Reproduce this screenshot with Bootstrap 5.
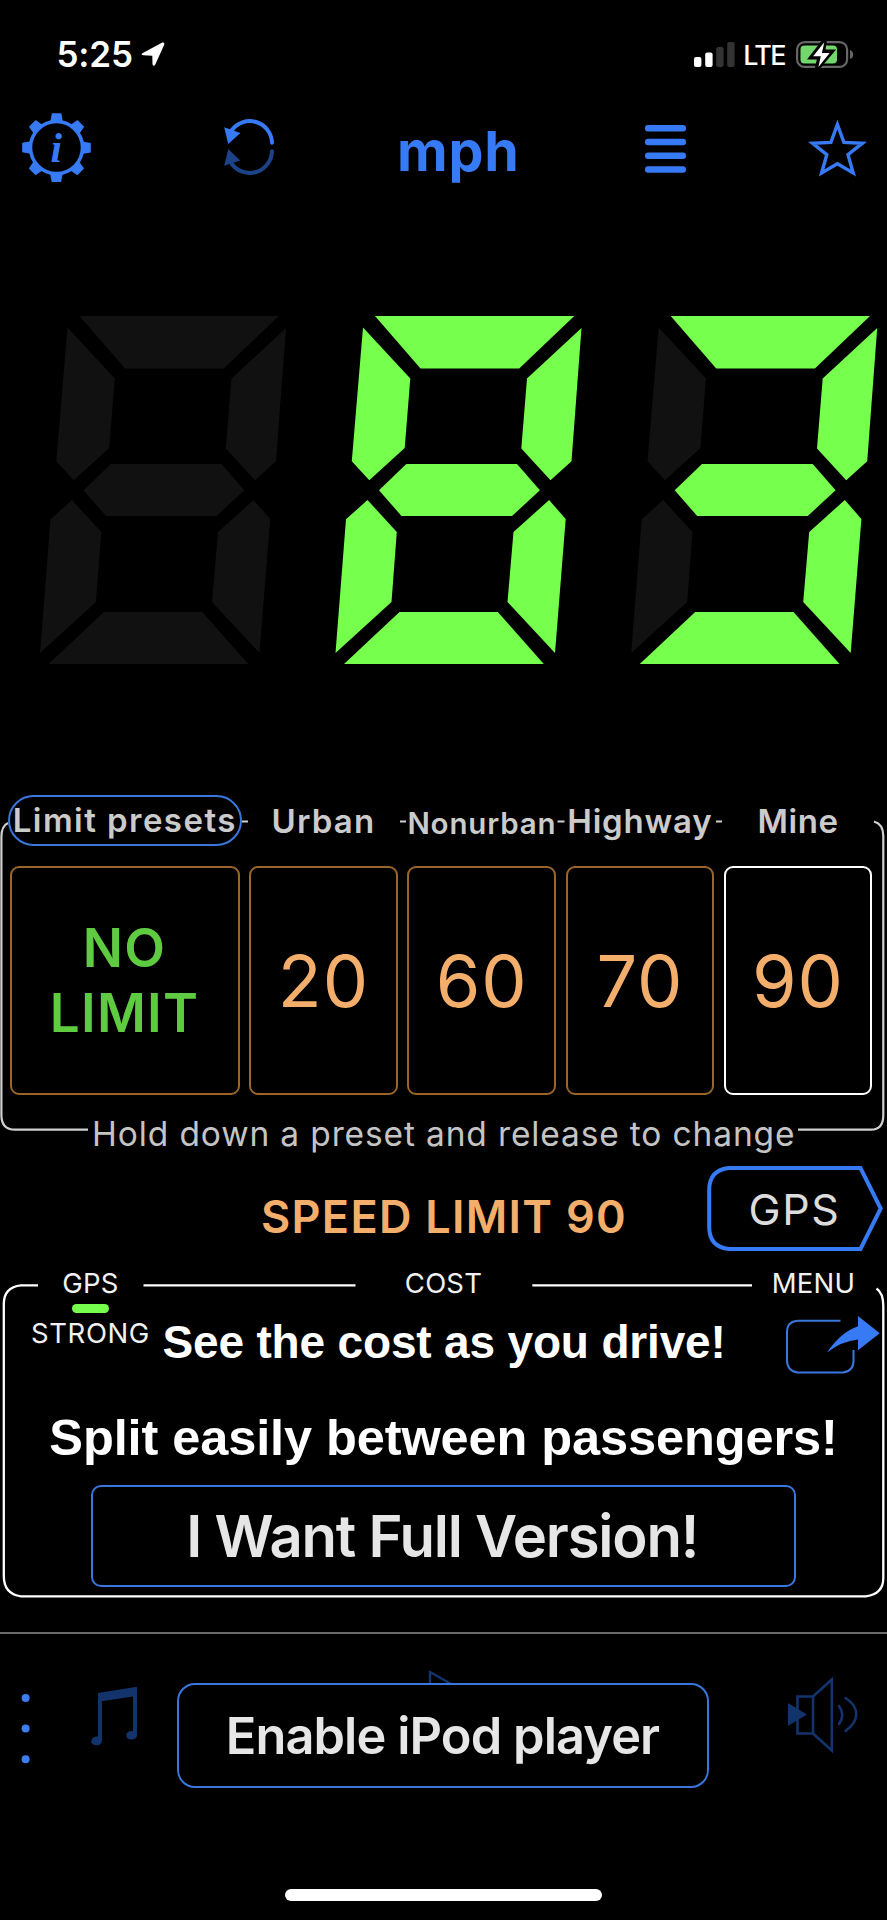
<!DOCTYPE html>
<html lang="en" data-bs-theme="dark">
<head>
<meta charset="utf-8">
<meta name="viewport" content="width=device-width, initial-scale=1">
<title>Speedometer</title>
<link href="https://cdn.jsdelivr.net/npm/bootstrap@5.3.0/dist/css/bootstrap.min.css" rel="stylesheet">
<style>
  :root { --blue:#377af5; --line-blue:#3a77dd; --dim-blue:#13336b; --lime:#77ff4e; --amber:#f3ae6b; --off:#111; }
  body { background:#000; color:#fff; font-family:Inter,"Liberation Sans",sans-serif; }
  .screen { width:887px; height:1920px; overflow:hidden; }
  .screen svg { display:block; flex:none; }
  .frame-lines { inset:0; pointer-events:none; }
  .clock { font-size:35px; font-weight:600; line-height:1; letter-spacing:-.16px; }
  .network { font-size:27px; font-weight:500; line-height:1; letter-spacing:-1.6px; }
  .status-bar { height:110px; padding-left:56.5px; padding-right:33px; }
  .toolbar { height:90px; }
  .unit { width:126px; font-size:55.5px; font-weight:700; line-height:1; letter-spacing:.8px; color:var(--blue); }
  .readout { height:590px; padding-top:90px; }
  .presets { height:370px; padding-left:9.5px; padding-top:5px; }
  .preset-grid { display:grid; grid-template-columns:230px repeat(4,148.5px); column-gap:9.7px; }
  .preset-label { font-size:33px; font-weight:600; line-height:50px; letter-spacing:1.2px; color:#cbcbcb; text-align:center; white-space:nowrap; padding-top:1px; }
  .label-pill { width:234.5px; height:51px; margin-left:-2px; border:2.4px solid var(--line-blue); border-radius:26px; line-height:47px; padding:0; display:flex; justify-content:center; letter-spacing:1.45px; }
  .preset { height:229px; border:2.3px solid #9a6529; border-radius:9px; color:var(--amber); font-size:72px; line-height:1; letter-spacing:.9px; background:none; padding:0; display:flex; align-items:center; justify-content:center; }
  .preset.no-limit { color:#5fcb40; font-size:53px; font-weight:600; line-height:65.5px; letter-spacing:1.3px; padding-top:1px; }
  .preset.chosen { border-color:#fff; }
  .hint { font-size:33.5px; line-height:40px; letter-spacing:.86px; color:#c4c4c4; margin-top:19px; margin-right:9px; text-align:center; white-space:nowrap; }
  .limit-row { height:100px; padding-left:261px; }
  .limit-text { font-size:45px; font-weight:600; line-height:60px; letter-spacing:1.28px; color:var(--amber); margin-top:27px; white-space:nowrap; }
  .gps-tag { width:176px; height:87px; margin-left:80px; margin-top:5px; font-size:43px; letter-spacing:1.5px; line-height:88px; padding-right:1px; color:#dcdcdc; }
  .cost-panel { height:340px; }
  .caption-text { font-size:27.5px; line-height:30px; letter-spacing:.2px; color:#f1f1f1; }
  .signal { width:36.5px; height:9.7px; border-radius:5px; background:var(--lime); }
  .promo { font-family:"Liberation Sans",sans-serif; font-weight:700; white-space:nowrap; }
  .promo-sm { font-size:46px; line-height:50px; letter-spacing:-.17px; }
  .promo-lg { font-size:50.5px; line-height:60px; letter-spacing:-.1px; }
  .app-btn { background:#000; color:#e6e6e6; font-weight:600; padding:0; border:2.3px solid var(--line-blue); white-space:nowrap; }
  .full-btn { width:705.5px; height:102px; border-radius:10px; font-size:58px; letter-spacing:-1.2px; line-height:1; padding-right:2px; }
  .ipod-btn { width:532px; height:104.5px; border-radius:18px; font-size:50.5px; letter-spacing:-.9px; line-height:1; position:relative; padding-top:1px; padding-right:1px; }
  .app-btn:hover { background:#000; color:#e6e6e6; border-color:var(--line-blue); }
  .player { height:286px; border-top:2.4px solid #6a6a6a; margin-top:31.6px; }
  .home-bar { width:317px; height:12px; border-radius:6px; background:#fff; margin-top:-28.6px; }
</style>
</head>
<body>
<main class="screen d-flex flex-column">

  <header class="status-bar d-flex justify-content-between flex-shrink-0">
    <div class="d-flex" style="padding-top:37px">
      <span class="clock">5:25</span>
      <svg class="ms-2" style="margin-top:5px" width="24" height="25" viewBox="0 0 24 25"><path d="M1.4 11.2 21.3.6Q23.8-.2 23.2 2.7L14.3 22.6Q12.4 25.3 11.5 22.2L11.3 13.7 2.1 13.2Q-.6 12.5 1.4 11.2Z" fill="#fff"/></svg>
    </div>
    <div class="d-flex" style="padding-top:41px">
      <svg width="42" height="27" viewBox="0 0 42 27"><rect x="0" y="16" width="7.4" height="10" rx="2" fill="#fff"/><rect x="11.2" y="11.5" width="7.4" height="14.5" rx="2" fill="#fff"/><rect x="22.2" y="6" width="7.4" height="20" rx="2" fill="#333"/><rect x="33.2" y="1" width="7.4" height="25" rx="2" fill="#333"/></svg>
      <span class="network" style="margin:1px 0 0 7px">LTE</span>
      <svg style="margin-left:11px" width="58" height="28" viewBox="0 0 58 28"><rect x="1.1" y="1.1" width="50" height="24.8" rx="7.5" fill="none" stroke="#666" stroke-width="2.2"/><path d="M54 9Q57.2 10 57.2 13.5T54 18Z" fill="#666"/><rect x="4.5" y="4.5" width="36.5" height="18" rx="4" fill="#73d76e"/><path d="M28.6-.5 15.5 16.3H23.6L21 27.8 35.4 10.8H27Z" fill="#fff" stroke="#000" stroke-width="4.4"/><path d="M28.3 1.2 17.1 15.3H24.8L22.4 26.1 33.7 11.9H25.9Z" fill="#fff"/></svg>
    </div>
  </header>

  <nav class="toolbar d-flex flex-shrink-0">
    <svg style="margin:3px 0 0 22px" width="69" height="70" viewBox="0 0 70 71">
      <defs><path id="tooth" d="M30.3.3H39.9L41.5 9H28.7Z" fill="#377af5"/></defs>
      <g><use href="#tooth"/><use href="#tooth" transform="rotate(45 35 35.1)"/><use href="#tooth" transform="rotate(90 35 35.1)"/><use href="#tooth" transform="rotate(135 35 35.1)"/><use href="#tooth" transform="rotate(180 35 35.1)"/><use href="#tooth" transform="rotate(225 35 35.1)"/><use href="#tooth" transform="rotate(270 35 35.1)"/><use href="#tooth" transform="rotate(315 35 35.1)"/></g>
      <circle cx="35" cy="35.1" r="26.4" fill="#000" stroke="#377af5" stroke-width="3.6"/>
      <text x="28.8" y="49.5" font-family="Liberation Serif, serif" font-style="italic" font-weight="700" font-size="42" fill="#377af5">i</text>
    </svg>
    <svg style="margin:8px 0 0 132px" width="53" height="58" viewBox="0 0 53 58">
      <path d="M8.5 12.5A22.3 22.3 0 0 1 49 24.8" fill="none" stroke="#377af5" stroke-width="4" stroke-linecap="round"/>
      <path d="M1.2 9.2 17.4 15 5.2 26Z" fill="#377af5"/>
      <path d="M8.5 45.5A22.3 22.3 0 0 0 49 33.2" fill="none" stroke="#1c4287" stroke-width="4" stroke-linecap="round"/>
      <path d="M1.2 47.8 17.2 42.5 5.2 31Z" fill="#1c4287"/>
    </svg>
    <span class="unit" style="margin:12.5px 0 0 121px">mph</span>
    <svg style="margin:15px 0 0 122px" width="42" height="49" viewBox="0 0 42 49"><g fill="#377af5"><rect y="0" width="41" height="6.5" rx="3"/><rect y="13.8" width="41" height="6.5" rx="3"/><rect y="27.6" width="41" height="6.5" rx="3"/><rect y="41.2" width="41" height="6.5" rx="3"/></g></svg>
    <svg style="margin:10px 0 0 121px" width="60" height="58" viewBox="0 0 60 58"><path d="M29.4 4.5 35.9 22.4 54.4 23.2 40 34.7 45.2 53 29.4 43.8 13.6 53 18.8 34.7 4.4 23.2 22.9 22.4Z" fill="none" stroke="#377af5" stroke-width="3.4"/></svg>
  </nav>

  <section class="readout flex-shrink-0">
    <svg width="887" height="400" viewBox="0 0 887 400" role="img" aria-label="83">
      <defs>
        <polygon id="sa" points="79.5,26 278.8,26 223.7,78.5 125,78.5"/>
        <polygon id="sb" points="286,38 276,171.3 255,190.3 225.8,158.5 231.5,88.5"/>
        <polygon id="sc" points="253.6,210 270.2,229 259.5,363 212,312 218,242"/>
        <polygon id="sd" points="104,322 202.3,322 248.3,374 48.5,374"/>
        <polygon id="se" points="72,210 101.3,242 96,312 40,363 50.5,229.3"/>
        <polygon id="sf" points="67.5,37.5 114.8,88.5 109.2,158 73.8,190.3 56.3,171.3"/>
        <polygon id="sg" points="83.5,200.3 110.8,174 221.5,174 244.4,200.3 216.5,226 106,226"/>
      </defs>
      <g fill="#111"><use href="#sa"/><use href="#sb"/><use href="#sc"/><use href="#sd"/><use href="#se"/><use href="#sf"/><use href="#sg"/></g>
      <g fill="#77ff4e" transform="translate(295.5 0)"><use href="#sa"/><use href="#sb"/><use href="#sc"/><use href="#sd"/><use href="#se"/><use href="#sf"/><use href="#sg"/></g>
      <g fill="#77ff4e" transform="translate(591.2 0)"><use href="#sa"/><use href="#sb"/><use href="#sc"/><use href="#sd"/><use href="#se" fill="#111"/><use href="#sf" fill="#111"/><use href="#sg"/></g>
    </svg>
  </section>

  <section class="presets position-relative flex-shrink-0">
    <svg class="frame-lines position-absolute" width="887" height="370" viewBox="0 0 887 370"><path d="M8 33Q1.4 36 1.4 47V325Q1.4 339.7 15 339.7H88M874 31.5Q883.3 34 883.3 46V325Q883.3 339.7 871 339.7H798M242 31.5H248M400 31.5H406M557.5 31.5H564.5M716 31.5H722" fill="none" stroke="#cfcfcf" stroke-width="2.2"/></svg>
    <div class="preset-grid position-relative">
      <div class="preset-label label-pill">Limit presets</div>
      <div class="preset-label">Urban</div>
      <div class="preset-label" style="font-size:29.5px;letter-spacing:.85px;padding-top:3px">Nonurban</div>
      <div class="preset-label" style="letter-spacing:.8px">Highway</div>
      <div class="preset-label" style="letter-spacing:.6px">Mine</div>
    </div>
    <div class="preset-grid" style="padding-top:18px">
      <button class="preset no-limit">NO<br>LIMIT</button>
      <button class="preset">20</button>
      <button class="preset">60</button>
      <button class="preset">70</button>
      <button class="preset chosen">90</button>
    </div>
    <div class="hint">Hold down a preset and release to change</div>
  </section>

  <section class="limit-row d-flex flex-shrink-0">
    <div class="limit-text">SPEED LIMIT 90</div>
    <div class="gps-tag position-relative text-center flex-shrink-0">
      <svg class="position-absolute top-0 start-0" width="176" height="87" viewBox="0 0 176 87"><path d="M22 3H153.5L173.7 43.5 153.5 84H22Q2.2 82 2.2 62V25Q2.2 5 22 3Z" fill="none" stroke="#377af5" stroke-width="4"/></svg>
      <span class="position-relative">GPS</span>
    </div>
  </section>

  <section class="cost-panel position-relative flex-shrink-0">
    <svg class="frame-lines position-absolute" width="887" height="340" viewBox="0 0 887 340"><path d="M38 25.3H21Q3.8 27 3.8 44V316Q3.8 334 21 336.3H866Q883.3 334 883.3 318V46Q883.3 33 876.5 28.5M143.5 25.3H355.5M532.3 25.3H752" fill="none" stroke="#fff" stroke-width="2.3"/></svg>
    <div class="d-flex" style="padding-top:8px">
      <div class="caption-text text-center" style="width:181px">GPS</div>
      <div class="caption-text text-center" style="width:525px">COST</div>
      <div class="caption-text text-center" style="width:181px;padding-left:34px">MENU</div>
    </div>
    <div class="d-flex" style="height:112px">
      <div class="d-flex flex-column align-items-center" style="width:131px;margin-left:25px;padding-top:5.5px">
        <div class="signal"></div>
        <div class="caption-text" style="margin-top:5px;letter-spacing:.6px">STRONG</div>
      </div>
      <div class="promo promo-sm" style="margin:18.5px 0 0 6.5px;width:564px">See the cost as you drive!</div>
      <svg style="margin:17px 0 0 57px" width="98" height="60" viewBox="0 0 98 60"><path d="M56.5 5.7H13.5Q3 6.5 3 17V45Q3 56 13.5 57.6H59Q69.5 56 69.5 46V35" fill="none" stroke="#3a77dd" stroke-width="2"/><path d="M43 37.5Q57 17 74 11.3V1L95.8 18.3 74 35.3V24.5Q58 26 43 37.5Z" fill="#377af5"/></svg>
    </div>
    <div class="promo promo-lg text-center" style="margin-top:-2.5px">Split easily between passengers!</div>
    <div class="d-flex" style="padding:17.5px 0 0 90.5px">
      <button class="btn app-btn full-btn">I Want Full Version!</button>
    </div>
  </section>

  <section class="player d-flex flex-shrink-0">
    <svg style="margin:58px 0 0 20px" width="12" height="75" viewBox="0 0 12 75"><g fill="#3b7df5"><circle cx="5.6" cy="6" r="4"/><circle cx="5.6" cy="36.5" r="4"/><circle cx="5.6" cy="67.3" r="4"/></g></svg>
    <svg style="margin:52px 0 0 58px" width="50" height="62" viewBox="0 0 50 62"><g fill="#13336b"><path d="M8 7 47 .8V48.5Q47 53 42 53.5 36.5 53.8 36.3 49.5 36.5 44.5 43 45V10.5L12 15.3V55Q11.5 59 7 59.3 1.4 59.3 1.3 55 1.8 50.3 8 50.5Z"/></g></svg>
    <div class="position-relative" style="margin:49.5px 0 0 37px">
      <svg class="position-absolute" style="left:251px;top:-14px" width="50" height="34" viewBox="0 0 50 34"><path d="M2 34V3L46 28" fill="none" stroke="#13336b" stroke-width="2.4"/></svg>
      <button class="btn app-btn ipod-btn">Enable iPod player</button>
    </div>
    <svg style="margin:42px 0 0 77px" width="74" height="78" viewBox="0 0 74 78"><g fill="none" stroke="#13336b" stroke-width="2.6"><path d="M11.5 20.5H27V57.5H11.5ZM27 20.5 45.8 3.5V74.5L27 57.5"/><path d="M53 30Q59.5 39 53 48M59.5 22Q70.3 29 70.3 38T59.5 55" stroke-linecap="round"/></g><path d="M2 27 21 38.5 2 50Z" fill="#13336b"/></svg>
  </section>
  <div class="home-bar flex-shrink-0 align-self-center"></div>
</main>
<script src="https://cdn.jsdelivr.net/npm/bootstrap@5.3.0/dist/js/bootstrap.bundle.min.js"></script>
</body>
</html>
